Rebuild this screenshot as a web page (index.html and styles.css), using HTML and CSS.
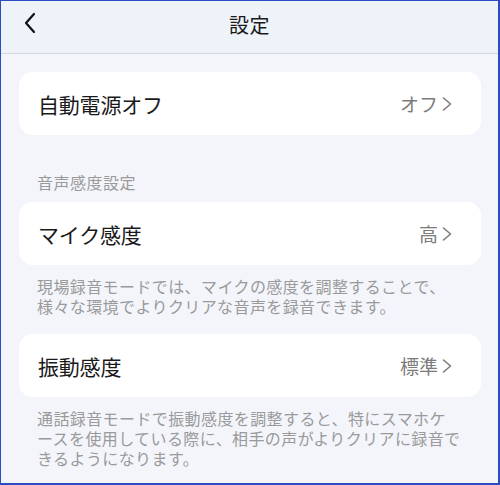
FILE: index.html
```html
<!DOCTYPE html>
<html lang="ja">
<head>
<meta charset="UTF-8">
<meta name="viewport" content="width=device-width, initial-scale=1.0">
<title>設定</title>
<link rel="stylesheet" href="styles.css">
</head>
<body>
    <div class="screen">
        <header class="topbar">
            <button class="back" aria-label="戻る">
                <svg width="14" height="22" viewBox="0 0 14 22"><path d="M11 2 L3 11 L11 20" fill="none" stroke="#111" stroke-width="2.2" stroke-linecap="round" stroke-linejoin="round"/></svg>
            </button>
            <h1>設定</h1>
        </header>

        <main class="content">
            <div class="card">
                <span class="name">自動電源オフ</span>
                <span class="value">オフ <svg class="arrow" width="10" height="14" viewBox="0 0 10 14"><path d="M1.5 1 L8.5 7 L1.5 13" fill="none" stroke="#7b7b7b" stroke-width="1.6" stroke-linecap="round" stroke-linejoin="round"/></svg></span>
            </div>

            <div class="section-title">音声感度設定</div>

            <div class="card">
                <span class="name">マイク感度</span>
                <span class="value">高 <svg class="arrow" width="10" height="14" viewBox="0 0 10 14"><path d="M1.5 1 L8.5 7 L1.5 13" fill="none" stroke="#7b7b7b" stroke-width="1.6" stroke-linecap="round" stroke-linejoin="round"/></svg></span>
            </div>
            <p class="note">現場録音モードでは、マイクの感度を調整することで、<br>様々な環境でよりクリアな音声を録音できます。</p>

            <div class="card">
                <span class="name">振動感度</span>
                <span class="value">標準 <svg class="arrow" width="10" height="14" viewBox="0 0 10 14"><path d="M1.5 1 L8.5 7 L1.5 13" fill="none" stroke="#7b7b7b" stroke-width="1.6" stroke-linecap="round" stroke-linejoin="round"/></svg></span>
            </div>
            <p class="note">通話録音モードで振動感度を調整すると、特にスマホケ<br>ースを使用している際に、相手の声がよりクリアに録音で<br>きるようになります。</p>
        </main>
    </div>
</body>
</html>
```

FILE: styles.css
```css
* {
    box-sizing: border-box;
}
body {
    margin: 0;
    font-family: "Noto Sans CJK JP", "Noto Sans", sans-serif;
    background-color: #fff;
}
.screen {
    width: 500px;
    height: 485px;
    overflow: hidden;
    background-color: #f3f5fa;
    border-style: solid;
    border-color: #2b4cc2;
    border-width: 1px 2px 2px 1px;
}
.topbar {
    height: 53px;
    padding-bottom: 6px;
    background-color: #eef2f9;
    border-bottom: 1px solid #d3d7de;
    display: flex;
    align-items: center;
    justify-content: center;
    position: relative;
}
.back {
    position: absolute;
    left: 22px;
    top: 11px;
    padding: 0;
    border: none;
    background: none;
    display: flex;
}
.topbar h1 {
    margin: 0;
    font-size: 20px;
    font-weight: 400;
    color: #1a1a1a;
    letter-spacing: 0.5px;
}
.content {
    padding: 18px 17px 0 18px;
}
.card {
    height: 63px;
    background-color: #fff;
    border-radius: 14px;
    display: flex;
    align-items: center;
    justify-content: space-between;
    padding: 0 29px 0 19px;
}
.name {
    font-size: 21px;
    color: #1a1a1a;
    letter-spacing: -0.2px;
}
.value {
    font-size: 19px;
    color: #7b7b7b;
    display: flex;
    align-items: center;
    gap: 2px;
}
.arrow {
    margin-left: 2px;
}
.section-title {
    margin: 37px 0 10px 18px;
    font-size: 16px;
    line-height: 20px;
    letter-spacing: 0.5px;
    color: #9a9a9a;
}
.note {
    margin: 11px 0 18px 18px;
    font-size: 16px;
    line-height: 20px;
    letter-spacing: 0.4px;
    color: #9a9a9a;
}
```
